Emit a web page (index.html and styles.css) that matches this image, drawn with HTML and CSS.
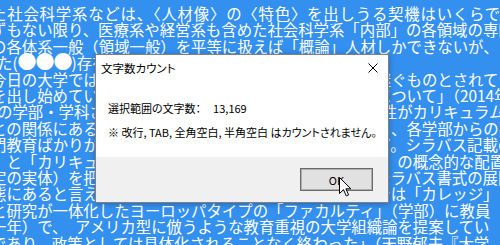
FILE: index.html
```html
<!DOCTYPE html>
<html lang="ja">
  <head>
    <meta charset="UTF-8" />
    <meta name="viewport" content="width=device-width, initial-scale=1.0" />
    <title>文字数カウント</title>
    <link rel="stylesheet" href="styles.css">
  </head>
  <body>
    <div class="doc">
      <div class="ln ln-wide">た社会科学系などは、〈人材像〉の〈特色〉を出しうる契機はいくらでも</div>
      <div class="ln">ずもない限り、医療系や経営系も含めた社会科学系「内部」の各領域の専門</div>
      <div class="ln">の各体系一般（領域一般）を平等に扱えば「概論」人材しかできないが、</div>
      <div class="ln ln-shift">た(<span class="dots">●●●</span>)存在しているといえる。</div>
      <div class="ln">今日の大学では、学部の教育課程は学位授与方針を引き継ぐものとされている</div>
      <div class="ln">を出し始めている。中教審の答申「教育課程の質的転換について」（2014年）</div>
      <div class="ln ln-shift">の学部・学科さえもある。それぞれの学部の教員の専門性がカリキュラムの編成</div>
      <div class="ln">との関係にあることは否定できない。しかし実際のところ、各学部からの要</div>
      <div class="ln">門教育ばかりが重視され、教養教育は軽視されてきたのだ。シラバス記載の</div>
      <div class="ln">」と「カリキュラム」とは区別されず、「学部の教育課程」の概念的な配置</div>
      <div class="ln">定の実体）を把握することは困難であり、現在の大学のシラバス書式の展開</div>
      <div class="ln">態にあると言える。かつて大学審議会が提唱したモデルでは「カレッジ」と</div>
      <div class="ln">と研究が一体化したヨーロッパタイプの「ファカルティ」（学部）に教員</div>
      <div class="ln">一年）で、　アメリカ型に倣うような教育重視の大学組織論を提案してい</div>
      <div class="ln">であり、政策としては具体化されることなく終わった」（天野郁夫『大学</div>
    </div>

    <div class="dialog">
      <div class="titlebar">
        <span class="title">文字数カウント</span>
        <svg class="close" width="10" height="10" viewBox="0 0 10 10">
          <path d="M0.5 0.5 L9.5 9.5 M9.5 0.5 L0.5 9.5" stroke="#000" stroke-width="1" fill="none" />
        </svg>
      </div>
      <div class="content">
        <p class="row"><span class="label">選択範囲の文字数：</span><span class="num">13,169</span></p>
        <p class="row note">※ 改行, TAB, 全角空白, 半角空白 はカウントされません。</p>
      </div>
      <div class="footer">
        <button class="ok">OK</button>
      </div>
    </div>

    <svg class="cursor" width="13" height="20" viewBox="0 0 13 20">
      <path d="M0.5 0.5 L0.5 16.5 L4.5 12.7 L7.3 18.9 L9.6 17.9 L6.9 11.8 L11.8 11.8 Z" fill="#fff" stroke="#000" stroke-width="1" stroke-linejoin="miter" />
    </svg>
  </body>
</html>
```

FILE: styles.css
```css
body {
  margin: 0;
  width: 500px;
  height: 245px;
  overflow: hidden;
  background-color: #3490ef;
  font-family: "Noto Sans CJK JP", sans-serif;
}

.doc {
  padding-top: 5px;
  color: white;
  font-size: 15.4px;
  line-height: 16.4px;
  white-space: nowrap;
}

.ln {
  margin-left: -9px;
}

.ln-wide {
  letter-spacing: 0.8px;
}

.ln-shift {
  margin-left: -3px;
}

.dots {
  font-size: 19px;
  line-height: 0;
  letter-spacing: -1px;
}

.dialog {
  position: absolute;
  left: 95px;
  top: 54px;
  width: 292px;
  height: 147px;
  background-color: white;
  border: 1px solid #808080;
  box-shadow: 0 1px 6px rgba(0, 0, 0, 0.3);
  display: flex;
  flex-direction: column;
  font-size: 11px;
  font-feature-settings: "palt";
  color: black;
}

.titlebar {
  height: 25px;
  display: flex;
  align-items: center;
  justify-content: space-between;
  padding: 0 10px 0 5px;
}

.title {
  font-size: 11.5px;
}

.content {
  flex: 1;
  padding: 21px 0 0 12px;
}

.row {
  margin: 0;
  line-height: 14px;
}

.note {
  margin-top: 10px;
}

.num {
  margin-left: 12px;
}

.footer {
  height: 45px;
  background-color: #f0f0f0;
  display: flex;
  align-items: center;
  justify-content: flex-end;
  padding-right: 15px;
}

.ok {
  width: 73px;
  height: 23px;
  padding: 0;
  background-color: #e1e1e1;
  border: 1px solid #6a6a6a;
  box-shadow: inset 0 0 0 1px #b0b0b0;
  font-family: inherit;
  font-size: 11px;
  color: black;
}

.cursor {
  position: absolute;
  left: 339px;
  top: 177px;
}
```
